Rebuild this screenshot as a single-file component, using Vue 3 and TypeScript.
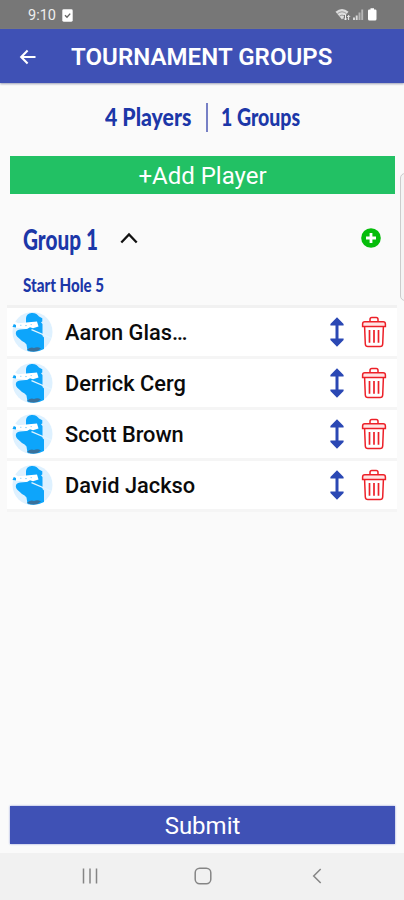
<script setup lang="ts">
interface Player {
  id: number
  name: string
}

const players: Player[] = [
  { id: 1, name: 'Aaron Glas…' },
  { id: 2, name: 'Derrick Cerg' },
  { id: 3, name: 'Scott Brown' },
  { id: 4, name: 'David Jackso' },
]
</script>

<template>
  <div class="screen">
    <div class="status">
      <span class="time">9:10</span>
      <svg class="check" width="11" height="13" viewBox="0 0 11 13">
        <rect x="0.3" y="0.3" width="10.4" height="12.4" rx="1.4" fill="#fff" />
        <path d="M3 6.2l2 2 3.2-3.6" fill="none" stroke="#666" stroke-width="1.4" />
      </svg>
      <svg class="signals" width="46" height="16" viewBox="0 0 46 16">
        <path d="M1.5 4.7Q8-.8 14.500 4.700L8 12.500Z" fill="#ddd" />
        <path d="M3.500 6.600Q8 3 12.500 6.600M5.500 9Q8 7 10.500 9" fill="none" stroke="#888" stroke-width=".8" />
        <path d="M11.500 13V8M14.500 8v5" stroke="#777" stroke-width="3" />
        <path d="M11.500 7.500V13M9.800 11.300l1.700 1.700 1.500-1.700M14.600 13V8.500M13.200 9.900l1.400-1.500 1.500 1.500" fill="none" stroke="#eee" stroke-width="1" />
        <path d="M20 13v-2.500M22.700 13V8.500" stroke="#ddd" stroke-width="1.900" />
        <path d="M25.500 13V5.500M28.200 13V2.500" stroke="#b5b5b5" stroke-width="1.900" />
        <path d="M36.500 1.300h3.500v1.200h1.200q1.300 0 1.300 1.300v8.200q0 1.500-1.500 1.500h-5.500q-1.500 0-1.500-1.500V3.800q0-1.300 1.300-1.300h1.200z" fill="#fff" />
      </svg>
    </div>

    <header class="bar">
      <svg class="back" width="18" height="16" viewBox="0 0 18 16">
        <path d="M16.500 8H2.400M8.600 1.600L2.200 8l6.400 6.400" fill="none" stroke="#fff" stroke-width="2.100" />
      </svg>
      <h1>TOURNAMENT GROUPS</h1>
    </header>

    <main>
      <div class="summary">
        <div class="count players"><span>4 Players</span></div>
        <i class="rule"></i>
        <div class="count groups"><span>1 Groups</span></div>
      </div>

      <button class="action add" type="button">+Add Player</button>

      <section class="group">
        <div class="heading">
          <h2><span>Group 1</span></h2>
          <svg class="chevron" width="18" height="12" viewBox="0 0 18 12">
            <path d="M1.300 10.500L9 2.500l7.700 8" fill="none" stroke="#111" stroke-width="2.300" />
          </svg>
          <svg class="plus" width="20" height="20" viewBox="0 0 20 20">
            <circle cx="10" cy="10" r="9.800" fill="#06bd0b" />
            <path d="M10 5v10M5 10h10" stroke="#fff" stroke-width="2.800" />
          </svg>
        </div>
        <p class="start"><span>Start Hole 5</span></p>
      </section>

      <ul>
        <li v-for="player in players" :key="player.id">
          <svg class="avatar" width="42" height="42" viewBox="0 0 42 42">
            <circle cx="21.500" cy="21" r="20" fill="#def1ff" />
            <path d="M15 10.500V7Q15.500 2.500 20.500 2c4-.3 6 1.500 7.500 3.600l3.300 1.600v3.200l-1.300.8L31.500 13v12l1.500 1.500V38Q26 42 16.500 40L15.500 33.500Q14 31 11 30l-3-2.700Q4 24.500 5 21q1-2.500 4.500-2.500L15 18z" fill="#0da5fb" />
            <path d="M1.500 16.500L4 10.500l3 1.700 8-.7 11-1 1.500 5-5.500 1.700-3-1-3 1.800-7-1z" fill="#fff" />
            <path d="M1.500 16l1.300-3 2.200 1v2.500z" fill="#0da5fb" />
            <path d="M9 14.300h1.500M14 14.600h2M19.500 13.600h1.500" stroke="#9cdcff" stroke-width="1" />
            <path d="M20.500 18.700L40 27" stroke="#e5f5ff" stroke-width="1.300" />
            <path d="M16 38.700q4-3.200 7-1.700 3.500-1.600 7 .4-6 5.700-14 1.300z" fill="#39709b" />
          </svg>
          <span class="name">{{ player.name }}</span>
          <svg class="move" width="14" height="30" viewBox="0 0 14 30">
            <path d="M7 5v20" stroke="#2b48b4" stroke-width="3" />
            <path d="M7 .3L13.600 7v1.400H.4V7zM7 29.700L.4 23v-1.400h13.200V23z" fill="#2b48b4" />
          </svg>
          <svg class="trash" width="26" height="32" viewBox="0 0 26 32">
            <path d="M1.600 10.600V8q0-2.200 2.200-2.200h18.400q2.200 0 2.200 2.200v2.600z" fill="#ffe4e4" />
            <path d="M9 5.600V3.400Q9 1.600 10.800 1.600h4.400Q17 1.600 17 3.400v2.200M1.600 10.600V8q0-2.200 2.200-2.200h18.400q2.200 0 2.200 2.200v2.600zM3.600 10.800L4.300 28q.2 2.600 2.600 2.600h12.200q2.400 0 2.600-2.600l.7-17.200" fill="none" stroke="#ed2028" stroke-width="1.500" />
            <path d="M8.500 14v12.800M13 14v12.800M17.500 14v12.800" stroke="#ed2028" stroke-width="1.700" />
          </svg>
        </li>
      </ul>
      <button class="action submit" type="button">Submit</button>
      <i class="edge"></i>
    </main>

    <nav>
      <svg width="16" height="16" viewBox="0 0 16 16">
        <path d="M1.500 .5v15M8 .5v15M14.500 .5v15" stroke="#858585" stroke-width="1.500" />
      </svg>
      <svg width="18" height="18" viewBox="0 0 18 18">
        <rect x="1.200" y="1.200" width="15.600" height="15.600" rx="4.500" fill="none" stroke="#858585" stroke-width="1.500" />
      </svg>
      <svg width="10" height="16" viewBox="0 0 10 16">
        <path d="M8.700 1L1.700 8l7 7" fill="none" stroke="#858585" stroke-width="1.500" />
      </svg>
    </nav>
  </div>
</template>

<style>
body {
  margin: 0;
}
</style>

<style scoped>
.screen {
  display: flex;
  flex-direction: column;
  width: 404px;
  height: 900px;
  overflow: hidden;
  background: #fafafa;
  font-family: Roboto, "Liberation Sans", sans-serif;
}
svg {
  display: block;
  flex: none;
}
h1, h2, p, ul {
  margin: 0;
  padding: 0;
}
.status {
  display: flex;
  align-items: center;
  box-sizing: border-box;
  height: 29px;
  padding: 1px 24px 0 28px;
  background: #777;
  color: #eee;
}
.time {
  width: 34px;
  padding-top: 2px;
  font-size: 14.500px;
  line-height: 18px;
}
.signals {
  margin-left: auto;
}
.bar {
  display: flex;
  align-items: center;
  box-sizing: border-box;
  height: 54px;
  padding: 2px 0 0 19px;
  background: #3f51b5;
  box-shadow: 0 1px 2px #9b9fb5;
  color: #fff;
}
h1 {
  margin-left: 34px;
  font-size: 24px;
  font-weight: 600;
  letter-spacing: 0.06px;
  line-height: 30px;
  white-space: nowrap;
}
main {
  position: relative;
  display: flex;
  flex: 1;
  flex-direction: column;
}
.summary {
  display: flex;
  height: 73px;
  padding-left: 105px;
}
.count, h2, .start {
  color: #1c37a8;
  font-family: Lato, "Liberation Sans", sans-serif;
  font-weight: 900;
  white-space: nowrap;
}
.count span, h2 span, .start span {
  display: inline-block;
  transform-origin: left center;
}
.count {
  padding-top: 17px;
  font-size: 25px;
  line-height: 32px;
}
.players {
  width: 101px;
}
.groups {
  width: 82px;
  margin-left: 13px;
}
.players span {
  transform: scaleX(0.85);
}
.groups span {
  transform: scaleX(0.78);
}
.rule {
  width: 2px;
  height: 29px;
  margin-top: 20px;
  background: #7780c5;
}
.action {
  flex: none;
  height: 38px;
  margin: 0 9px 0 10px;
  padding: 2px 0 0;
  border: 0;
  border-radius: 0;
  color: #fff;
  font: 400 24px/36px Roboto, "Liberation Sans", sans-serif;
  text-align: center;
}
.add {
  background: #22c164;
}
.group {
  height: 111px;
}
.heading {
  display: flex;
  align-items: center;
  height: 78px;
  padding: 10px 23px 0 23px;
  box-sizing: border-box;
}
h2 {
  width: 97px;
  padding-top: 2px;
  font-size: 28px;
  line-height: 36px;
}
h2 span {
  transform: scaleX(0.74);
}
.plus {
  margin-left: auto;
}
.start {
  padding-left: 23px;
  margin-top: 2px;
  font-size: 18px;
  line-height: 22px;
}
.start span {
  transform: scaleX(0.84);
}
ul {
  margin: 0 7px;
  border-top: 3px solid #f1f1f1;
  list-style: none;
}
li {
  display: flex;
  align-items: center;
  box-sizing: border-box;
  height: 51px;
  padding: 0 10px 1px 4px;
  border-bottom: 3px solid #f5f5f5;
  background: #fff;
}
.name {
  width: 265px;
  margin-left: 12px;
  padding-top: 2px;
  color: #0b0b0b;
  font-size: 21.800px;
  font-weight: 500;
  line-height: 28px;
}
.trash {
  margin-left: auto;
}
.submit {
  margin-top: auto;
  margin-bottom: 9px;
  background: #3f51b5;
  box-shadow: 0 0 2px #8d98d8;
}
.edge {
  position: absolute;
  top: 90px;
  right: -8px;
  width: 10px;
  height: 126px;
  border: 1.500px solid #ccc;
  border-radius: 5px;
  background: #f4f4f4;
}
nav {
  display: flex;
  align-items: center;
  gap: 96px;
  box-sizing: border-box;
  height: 47px;
  padding: 0 0 1px 82px;
  background: #f1f1f1;
}
nav svg:last-child {
  margin-left: 4px;
}
</style>
